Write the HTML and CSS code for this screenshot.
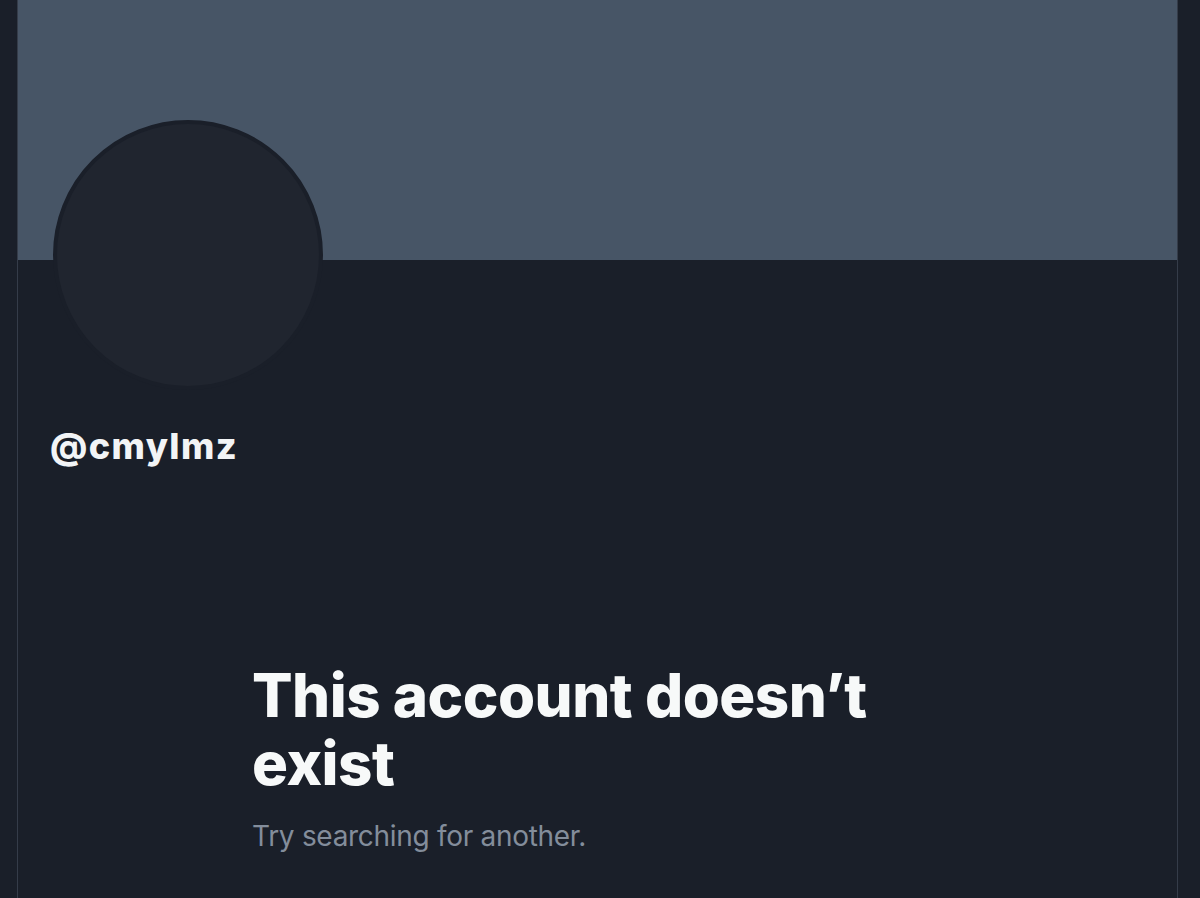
FILE: index.html
```html
<!DOCTYPE html>
<html>
<head>
<meta charset="utf-8">
<link rel="stylesheet" href="styles.css">
</head>
<body>
<div class="page">
  <div class="banner"></div>
  <div class="profile">
    <div class="avatar"></div>
    <div class="handle">@cmylmz</div>
  </div>
  <div class="empty">
    <h1 class="title">This account doesn’t exist</h1>
    <p class="sub">Try searching for another.</p>
  </div>
</div>
</body>
</html>
```
FILE: styles.css
```css
html, body {
  margin: 0;
  padding: 0;
  background: #1a1f29;
  height: 100%;
  overflow: hidden;
}
.page {
  margin-left: 17px;
  width: 1159px;
  height: 898px;
  border-left: 1px solid #353c49;
  border-right: 1px solid #353c49;
  font-family: Inter, "Liberation Sans", sans-serif;
}
.banner {
  height: 260px;
  background: #475566;
}
.profile {
  padding-left: 35px;
}
.avatar {
  width: 262px;
  height: 262px;
  margin-top: -140px;
  border-radius: 50%;
  background: #20252f;
  border: 4px solid #1a1f29;
}
.handle {
  margin-top: 34px;
  margin-left: -3px;
  color: #f2f4f6;
  font-size: 36px;
  line-height: 44px;
  font-weight: 800;
  letter-spacing: 1.4px;
}
.empty {
  padding-left: 234px;
  padding-top: 193px;
  width: 660px;
}
.title {
  margin: 0;
  color: #f7f9f9;
  font-size: 60px;
  line-height: 68px;
  font-weight: 800;
  letter-spacing: -0.5px;
}
.sub {
  margin: 22px 0 0;
  color: #838d9b;
  font-size: 28px;
  line-height: 34px;
  letter-spacing: -0.3px;
}
```
